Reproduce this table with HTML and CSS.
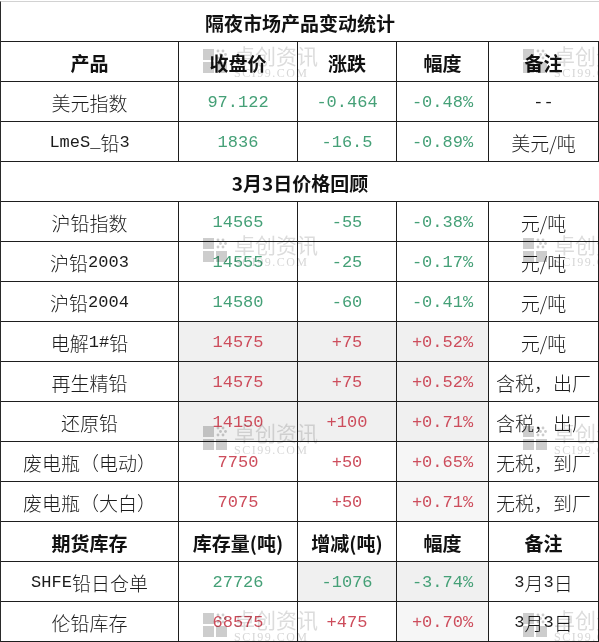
FILE: index.html
```html
<!DOCTYPE html>
<html lang="zh-CN">
<head>
<meta charset="utf-8">
<title>隔夜市场产品变动统计</title>
<link rel="stylesheet" href="styles.css">
</head>
<body>
<div class="page">
  <div class="sheet">
    <div class="cell wide head">隔夜市场产品变动统计</div>

    <div class="cell head">产品</div>
    <div class="cell head">收盘价</div>
    <div class="cell head">涨跌</div>
    <div class="cell head">幅度</div>
    <div class="cell head">备注</div>

    <div class="cell">美元指数</div>
    <div class="cell num down">97.122</div>
    <div class="cell num down">-0.464</div>
    <div class="cell num down">-0.48%</div>
    <div class="cell num">--</div>

    <div class="cell"><span class="num">LmeS_</span>铅<span class="num">3</span></div>
    <div class="cell num down">1836</div>
    <div class="cell num down">-16.5</div>
    <div class="cell num down">-0.89%</div>
    <div class="cell">美元/吨</div>

    <div class="cell wide head">3月3日价格回顾</div>

    <div class="cell">沪铅指数</div>
    <div class="cell num down">14565</div>
    <div class="cell num down">-55</div>
    <div class="cell num down">-0.38%</div>
    <div class="cell">元/吨</div>

    <div class="cell">沪铅<span class="num">2003</span></div>
    <div class="cell num down">14555</div>
    <div class="cell num down">-25</div>
    <div class="cell num down">-0.17%</div>
    <div class="cell">元/吨</div>

    <div class="cell">沪铅<span class="num">2004</span></div>
    <div class="cell num down">14580</div>
    <div class="cell num down">-60</div>
    <div class="cell num down">-0.41%</div>
    <div class="cell">元/吨</div>

    <div class="cell">电解<span class="num">1#</span>铅</div>
    <div class="cell num up shade">14575</div>
    <div class="cell num up shade">+75</div>
    <div class="cell num up shade">+0.52%</div>
    <div class="cell">元/吨</div>

    <div class="cell">再生精铅</div>
    <div class="cell num up shade">14575</div>
    <div class="cell num up shade">+75</div>
    <div class="cell num up shade">+0.52%</div>
    <div class="cell">含税，出厂</div>

    <div class="cell">还原铅</div>
    <div class="cell num up shade">14150</div>
    <div class="cell num up shade">+100</div>
    <div class="cell num up shade">+0.71%</div>
    <div class="cell">含税，出厂</div>

    <div class="cell">废电瓶（电动）</div>
    <div class="cell num up">7750</div>
    <div class="cell num up">+50</div>
    <div class="cell num up faint">+0.65%</div>
    <div class="cell">无税，到厂</div>

    <div class="cell">废电瓶（大白）</div>
    <div class="cell num up">7075</div>
    <div class="cell num up">+50</div>
    <div class="cell num up faint">+0.71%</div>
    <div class="cell">无税，到厂</div>

    <div class="cell head">期货库存</div>
    <div class="cell head">库存量(吨)</div>
    <div class="cell head">增减(吨)</div>
    <div class="cell head">幅度</div>
    <div class="cell head">备注</div>

    <div class="cell"><span class="num">SHFE</span>铅日仓单</div>
    <div class="cell num down">27726</div>
    <div class="cell num down shade">-1076</div>
    <div class="cell num down shade">-3.74%</div>
    <div class="cell"><span class="num">3</span>月<span class="num">3</span>日</div>

    <div class="cell">伦铅库存</div>
    <div class="cell num up">68575</div>
    <div class="cell num up">+475</div>
    <div class="cell num up faint">+0.70%</div>
    <div class="cell"><span class="num">3</span>月<span class="num">3</span>日</div>

    <div class="wm at-left row-1">
      <svg class="wm-logo" viewBox="0 0 26 24" width="26" height="24"><rect x="0" y="0" width="11" height="11"/><rect x="0" y="13" width="11" height="11"/><rect x="13" y="13" width="11" height="11"/><circle cx="15" cy="2" r="1.4"/><circle cx="20" cy="2" r="1.4"/><circle cx="17.5" cy="5.5" r="1.4"/><circle cx="22.5" cy="5.5" r="1.4"/><circle cx="15" cy="9" r="1.4"/><circle cx="20" cy="9" r="1.4"/></svg>
      <div class="wm-text"><span class="wm-cn">卓创资讯</span><span class="wm-en">SCI99.COM</span></div>
    </div>
    <div class="wm at-right row-1">
      <svg class="wm-logo" viewBox="0 0 26 24" width="26" height="24"><rect x="0" y="0" width="11" height="11"/><rect x="0" y="13" width="11" height="11"/><rect x="13" y="13" width="11" height="11"/><circle cx="15" cy="2" r="1.4"/><circle cx="20" cy="2" r="1.4"/><circle cx="17.5" cy="5.5" r="1.4"/><circle cx="22.5" cy="5.5" r="1.4"/><circle cx="15" cy="9" r="1.4"/><circle cx="20" cy="9" r="1.4"/></svg>
      <div class="wm-text"><span class="wm-cn">卓创资讯</span><span class="wm-en">SCI99.COM</span></div>
    </div>
    <div class="wm at-left row-2">
      <svg class="wm-logo" viewBox="0 0 26 24" width="26" height="24"><rect x="0" y="0" width="11" height="11"/><rect x="0" y="13" width="11" height="11"/><rect x="13" y="13" width="11" height="11"/><circle cx="15" cy="2" r="1.4"/><circle cx="20" cy="2" r="1.4"/><circle cx="17.5" cy="5.5" r="1.4"/><circle cx="22.5" cy="5.5" r="1.4"/><circle cx="15" cy="9" r="1.4"/><circle cx="20" cy="9" r="1.4"/></svg>
      <div class="wm-text"><span class="wm-cn">卓创资讯</span><span class="wm-en">SCI99.COM</span></div>
    </div>
    <div class="wm at-right row-2">
      <svg class="wm-logo" viewBox="0 0 26 24" width="26" height="24"><rect x="0" y="0" width="11" height="11"/><rect x="0" y="13" width="11" height="11"/><rect x="13" y="13" width="11" height="11"/><circle cx="15" cy="2" r="1.4"/><circle cx="20" cy="2" r="1.4"/><circle cx="17.5" cy="5.5" r="1.4"/><circle cx="22.5" cy="5.5" r="1.4"/><circle cx="15" cy="9" r="1.4"/><circle cx="20" cy="9" r="1.4"/></svg>
      <div class="wm-text"><span class="wm-cn">卓创资讯</span><span class="wm-en">SCI99.COM</span></div>
    </div>
    <div class="wm at-left row-3">
      <svg class="wm-logo" viewBox="0 0 26 24" width="26" height="24"><rect x="0" y="0" width="11" height="11"/><rect x="0" y="13" width="11" height="11"/><rect x="13" y="13" width="11" height="11"/><circle cx="15" cy="2" r="1.4"/><circle cx="20" cy="2" r="1.4"/><circle cx="17.5" cy="5.5" r="1.4"/><circle cx="22.5" cy="5.5" r="1.4"/><circle cx="15" cy="9" r="1.4"/><circle cx="20" cy="9" r="1.4"/></svg>
      <div class="wm-text"><span class="wm-cn">卓创资讯</span><span class="wm-en">SCI99.COM</span></div>
    </div>
    <div class="wm at-right row-3">
      <svg class="wm-logo" viewBox="0 0 26 24" width="26" height="24"><rect x="0" y="0" width="11" height="11"/><rect x="0" y="13" width="11" height="11"/><rect x="13" y="13" width="11" height="11"/><circle cx="15" cy="2" r="1.4"/><circle cx="20" cy="2" r="1.4"/><circle cx="17.5" cy="5.5" r="1.4"/><circle cx="22.5" cy="5.5" r="1.4"/><circle cx="15" cy="9" r="1.4"/><circle cx="20" cy="9" r="1.4"/></svg>
      <div class="wm-text"><span class="wm-cn">卓创资讯</span><span class="wm-en">SCI99.COM</span></div>
    </div>
    <div class="wm at-left row-4">
      <svg class="wm-logo" viewBox="0 0 26 24" width="26" height="24"><rect x="0" y="0" width="11" height="11"/><rect x="0" y="13" width="11" height="11"/><rect x="13" y="13" width="11" height="11"/><circle cx="15" cy="2" r="1.4"/><circle cx="20" cy="2" r="1.4"/><circle cx="17.5" cy="5.5" r="1.4"/><circle cx="22.5" cy="5.5" r="1.4"/><circle cx="15" cy="9" r="1.4"/><circle cx="20" cy="9" r="1.4"/></svg>
      <div class="wm-text"><span class="wm-cn">卓创资讯</span><span class="wm-en">SCI99.COM</span></div>
    </div>
    <div class="wm at-right row-4">
      <svg class="wm-logo" viewBox="0 0 26 24" width="26" height="24"><rect x="0" y="0" width="11" height="11"/><rect x="0" y="13" width="11" height="11"/><rect x="13" y="13" width="11" height="11"/><circle cx="15" cy="2" r="1.4"/><circle cx="20" cy="2" r="1.4"/><circle cx="17.5" cy="5.5" r="1.4"/><circle cx="22.5" cy="5.5" r="1.4"/><circle cx="15" cy="9" r="1.4"/><circle cx="20" cy="9" r="1.4"/></svg>
      <div class="wm-text"><span class="wm-cn">卓创资讯</span><span class="wm-en">SCI99.COM</span></div>
    </div>
  </div>
</div>
</body>
</html>
```
FILE: styles.css
```css
html, body {
  margin: 0;
  padding: 0;
  background: #ffffff;
  overflow: hidden;
}

body {
  font-family: "Noto Sans CJK SC", "Noto Sans", sans-serif;
  color: #1b1b1b;
}

.page {
  width: 599px;
  height: 642px;
  padding-top: 1px;
  box-sizing: border-box;
  overflow: hidden;
}

.sheet {
  position: relative;
  display: grid;
  grid-template-columns: 178px 119px 99px 92px 110px;
  border-top: 1px solid #d2d2d2;
  border-left: 1px solid #2a2a2a;
}

.cell {
  box-sizing: border-box;
  height: 40px;
  border-right: 1px solid #1e1e1e;
  border-bottom: 1px solid #1e1e1e;
  display: flex;
  align-items: center;
  justify-content: center;
  font-size: 19px;
  font-weight: 300;
  white-space: nowrap;
  padding-top: 1px;
}

.wide {
  grid-column: 1 / -1;
  border-right: none;
}

.head {
  font-weight: 700;
  color: #111111;
}

.num {
  font-family: "Liberation Mono", "DejaVu Sans Mono", monospace;
  font-size: 17px;
  font-weight: 400;
}

.up {
  color: #cd4d5c;
}

.down {
  color: #45a077;
}

.shade {
  background: #f0f0f0;
}

.faint {
  background: #f6f6f6;
}

/* watermark overlay */
.wm {
  position: absolute;
  display: flex;
  align-items: flex-start;
  gap: 5px;
  pointer-events: none;
  mix-blend-mode: multiply;
  opacity: 0.85;
}

.at-left { left: 202px; }
.at-right { left: 522px; }
.row-1 { top: 47px; }
.row-2 { top: 236px; }
.row-3 { top: 424px; }
.row-4 { top: 611px; }

.wm-logo {
  fill: #c4c4c4;
  flex: none;
}

.wm-text {
  display: flex;
  flex-direction: column;
  margin-top: -6px;
}

.wm-cn {
  font-size: 21px;
  line-height: 24px;
  font-weight: 400;
  color: #d6d6d6;
  white-space: nowrap;
}

.wm-en {
  font-family: "Liberation Serif", serif;
  font-size: 12px;
  line-height: 12px;
  letter-spacing: 1.5px;
  color: #d0d0d0;
  white-space: nowrap;
}
```
